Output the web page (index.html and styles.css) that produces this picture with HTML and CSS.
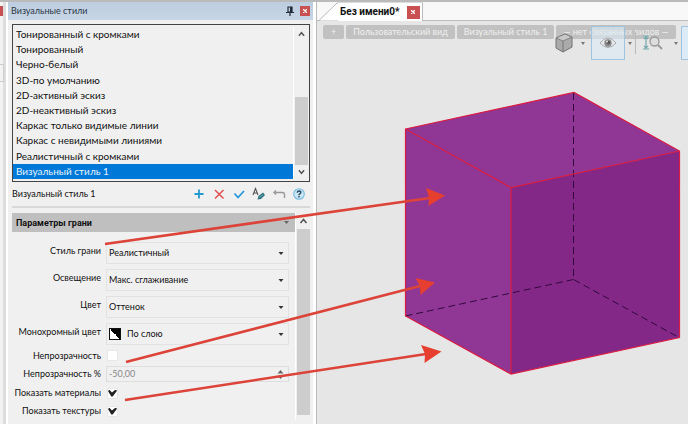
FILE: index.html
```html
<!DOCTYPE html>
<html lang="ru">
<head>
<meta charset="utf-8">
<title>Визуальные стили</title>
<link rel="stylesheet" href="styles.css">
</head>
<body>
<div class="app">
  <div class="dock"><span class="dock-close"></span><span class="dock-page"></span></div>
  <aside class="panel">
    <header class="panel-title">
      <h1>Визуальные стили</h1>
      <button class="pin" aria-label="Закрепить"><svg width="8" height="10" viewBox="0 0 8 10"><path d="M2 1h4v5H2zM0 6.500h8M4 6v4" fill="none" stroke="#222b38" stroke-width="1.200"/><path d="M4 1h2v5H4z" fill="#222b38"/></svg></button>
      <button class="close" aria-label="Закрыть панель"><svg width="4" height="4" viewBox="0 0 4 4"><path d="M0 0l4 4M4 0L0 4" stroke="#fff" stroke-width="1.300"/></svg></button>
    </header>
    <div class="listbox">
      <ul class="styles" role="listbox" aria-label="Визуальные стили">
        <li role="option">Тонированный с кромками</li>
        <li role="option">Тонированный</li>
        <li role="option">Черно-белый</li>
        <li role="option">3D-по умолчанию</li>
        <li role="option">2D-активный эскиз</li>
        <li role="option">2D-неактивный эскиз</li>
        <li role="option">Каркас только видимые линии</li>
        <li role="option">Каркас с невидимыми линиями</li>
        <li role="option">Реалистичный с кромками</li>
        <li role="option" aria-selected="true" class="selected">Визуальный стиль 1</li>
      </ul>
      <div class="scroll">
        <svg class="chevron" viewBox="0 0 13 16"><path d="M3.500 10l3-3.500 3 3.500" /></svg>
        <span class="thumb list-thumb"></span>
        <svg class="chevron" viewBox="0 0 13 16"><path d="M3.500 6l3 3.500 3-3.500" /></svg>
      </div>
    </div>
    <div class="actions">
      <span class="current">Визуальный стиль 1</span>
      <button aria-label="Добавить"><svg viewBox="0 0 14 14"><path d="M7 2.500v9M2.500 7h9" stroke="#2499cc" stroke-width="1.800"/></svg></button>
      <button aria-label="Удалить"><svg viewBox="0 0 14 14"><path d="M3 3l8.500 8.500M11.500 3L3 11.500" stroke="#e64f50" stroke-width="1.500"/></svg></button>
      <button aria-label="Применить"><svg viewBox="0 0 14 14"><path d="M2.500 6.500l3.500 4 6-6.500" fill="none" stroke="#2698da" stroke-width="1.800"/></svg></button>
      <button aria-label="Переименовать"><svg viewBox="0 0 14 14"><path d="M1 8L3.500 1.500 6 8M2 6h3" fill="none" stroke="#555" stroke-width="1.100"/><path d="M5.500 12.500l1-3.500 4.500-3.500 2 2.500-4 4z" fill="#2b7180"/><path d="M7.500 10.500l3.500-3" stroke="#77b3ba"/></svg></button>
      <button aria-label="Отменить"><svg viewBox="0 0 14 14"><path d="M2 5.500h8.500q2 0 2 2V11M4 3.500L2 5.500l2 2" fill="none" stroke="#999" stroke-width="1.400"/></svg></button>
      <button aria-label="Справка"><svg viewBox="0 0 14 14"><circle cx="7" cy="7" r="5.300" fill="#cce6f4" stroke="#77bce0" stroke-width="1.100"/><path d="M5.300 5.700q0-1.700 1.800-1.700t1.700 1.500q0 .8-1 1.300Q7 7.200 7 8.200M7 9v1.400" fill="none" stroke="#244963" stroke-width="1.400"/></svg></button>
    </div>
    <div class="params">
      <div class="params-main">
        <h2><button class="section">Параметры грани<svg width="5" height="3" viewBox="0 0 5 3"><path d="M0 0h5L2.500 3z" fill="#666"/></svg></button></h2>
        <form class="form">
          <label for="face">Стиль грани</label>
          <div class="field"><select id="face"><option>Реалистичный</option></select><svg viewBox="0 0 5 3"><path d="M0 0h5L2.500 3z"/></svg></div>
          <label for="light">Освещение</label>
          <div class="field"><select id="light"><option>Макс. сглаживание</option></select><svg viewBox="0 0 5 3"><path d="M0 0h5L2.500 3z"/></svg></div>
          <label for="color">Цвет</label>
          <div class="field"><select id="color"><option>Оттенок</option></select><svg viewBox="0 0 5 3"><path d="M0 0h5L2.500 3z"/></svg></div>
          <label for="mono">Монохромный цвет</label>
          <div class="field"><span class="swatch"></span><select id="mono" class="with-swatch"><option>По слою</option></select><svg viewBox="0 0 5 3"><path d="M0 0h5L2.500 3z"/></svg></div>
          <label class="compact" for="opacity">Непрозрачность</label>
          <input class="check" type="checkbox" id="opacity">
          <label class="compact" for="percent">Непрозрачность %</label>
          <div class="spinner"><input type="text" id="percent" value="-50,00" disabled><svg viewBox="0 0 7 9"><path d="M.5 3.500L3.500 0l3 3.500zM.5 5.500L3.500 9l3-3.500z" fill="#666"/></svg></div>
          <label class="compact" for="materials">Показать материалы</label>
          <input class="check" type="checkbox" id="materials" checked>
          <label class="compact" for="textures">Показать текстуры</label>
          <input class="check" type="checkbox" id="textures" checked>
        </form>
      </div>
      <div class="scroll">
        <svg class="chevron" viewBox="0 0 13 16"><path d="M3.500 10l3-3.500 3 3.500" /></svg>
        <span class="thumb params-thumb"></span>
      </div>
    </div>
  </aside>
  <main class="view">
    <nav class="tabs">
      <svg class="slope" viewBox="0 0 19 18"><path d="M0 18L18 1h1v17z" fill="#fff"/><path d="M0 18L18 .5h1" fill="none" stroke="#aaa" stroke-width=".8"/></svg>
      <div class="tab"><a href="#scene">Без имени0*</a><button class="close" aria-label="Закрыть документ"><svg width="4" height="4" viewBox="0 0 4 4"><path d="M0 0l4 4M4 0L0 4" stroke="#fff" stroke-width="1.300"/></svg></button></div>
    </nav>
    <div class="canvas" id="scene">
      <div class="chips">
        <button class="add">+</button>
        <button>Пользовательский вид</button>
        <button>Визуальный стиль 1</button>
        <button>— нет связанных видов —</button>
      </div>
      <div class="tools">
        <button aria-label="Ориентация"><svg width="18" height="20" viewBox="0 0 18 20"><path d="M1 5l9-4 7 3v10l-9 5-7-4z" fill="#aaa" stroke="#737373"/><path d="M1 5l7 3 9-4-7-3z" fill="#c8c8c8" stroke="#777" stroke-width=".8"/><path d="M8 8v11" stroke="#777"/></svg></button>
        <button class="drop" aria-label="Варианты ориентации"><svg width="4" height="3" viewBox="0 0 4 3"><path d="M0 0h4L2 3z"/></svg></button>
        <button class="eye" aria-label="Видимость"><svg width="18" height="12" viewBox="0 0 18 12"><path d="M1 6q8-10 16 0-8 9-16 0z" fill="#e6eaed" stroke="#aaa"/><circle cx="9" cy="6" r="3.700" fill="#888"/><circle cx="9.500" cy="5.500" r="1.800" fill="#555"/><circle cx="8" cy="4.500" r="1" fill="#ddd"/></svg></button>
        <button class="drop split" aria-label="Варианты видимости"><svg width="4" height="3" viewBox="0 0 4 3"><path d="M0 0h4L2 3z"/></svg></button>
        <button class="zoom" aria-label="Масштаб"><svg width="20" height="16" viewBox="0 0 20 16"><path d="M3 2v11M0 1h6M0 14h6M1 4l2-2 2 2M1 11l2 2 2-2" fill="none" stroke="#73a7ad" stroke-width="1.200"/><circle cx="11.500" cy="6.500" r="4.500" fill="#ddd" stroke="#999" stroke-width="1.300"/><path d="M15 10l4 4" stroke="#999" stroke-width="1.800"/></svg></button>
        <button class="drop narrow" aria-label="Варианты масштаба"><svg width="4" height="3" viewBox="0 0 4 3"><path d="M0 0h4L2 3z"/></svg></button>
        <button class="next" aria-label="Ещё"></button>
      </div>
      <svg class="cube" width="371" height="403" viewBox="317 21 371 403" role="img" aria-label="Куб">
        <path d="M405.500 129L574 92.500 679.500 151 511 187.500z" fill="#903795"/>
        <path d="M405.500 129L511 187.500V374L405.500 316z" fill="#903796"/>
        <path d="M511 187.500L679.500 151V337.500L511 374z" fill="#842887"/>
        <path d="M573.500 93V279.500L679 337.500M573.500 279.500L405.500 316" fill="none" stroke="#32083f" stroke-dasharray="7 4"/>
        <path d="M405.500 129L574 92.500 679.500 151V337.500L511 374 405.500 316zL511 187.500 679.500 151M511 187.500V374" fill="none" stroke="#d91c42" stroke-width="1.200"/>
      </svg>
    </div>
  </main>
</div>
<svg class="notes" width="688" height="424" viewBox="0 0 688 424" aria-hidden="true">
  <g stroke="#dc4339" stroke-width="2.600"><path d="M105 244L430 198M126 362L420 286M125 400L426 354"/></g>
  <g fill="#e63f2f"><path d="M445 195.500L426 188l3 9.500-.5 8.500zM435 282.500L415.500 278l4.500 8 .5 9zM441.500 351.500L421 345l4 9-.5 9z"/></g>
</svg>
</body>
</html>
```
FILE: styles.css
```css
* { box-sizing: border-box; }
body { margin: 0; overflow: hidden; font: 9px/12px Lato, "Noto Sans", sans-serif; color: #111; background: #f0f0f0; }
button, input, select { font: inherit; color: inherit; margin: 0; padding: 0; border: 0; background: none; }
h1, h2, ul { margin: 0; padding: 0; font: inherit; }
.app { display: grid; grid-template-columns: 8px 308px 1fr; min-height: 100vh; border-top: 2px solid #bababa; }

.dock { background: linear-gradient(90deg, #f3f3f3 3px, #ddd 3px 6px, #fff 6px); padding-top: 4px; }
.dock-close { display: block; width: 3px; height: 10px; background: #c75052; }
.dock-page { display: block; width: 4px; height: 18px; margin-top: 48px; border: 1px solid #ccc; border-left: 0; }

.panel { background: #f0f0f0; border-right: 3px solid #fff; }
.panel-title { display: flex; align-items: center; gap: 6px; height: 18px; padding: 0 3px; background: linear-gradient(#bdcee1, #c7d5e5); }
.panel-title h1 { flex: 1; color: #2b3643; }
.pin { display: flex; }
.close { display: grid; place-items: center; width: 10px; height: 10px; background: #c95152; }

.listbox { display: flex; height: 158px; margin: 4px 3px 0 4px; padding: 2px 1px 2px 0; border: 1px solid #444; background: #f0f0f0; }
.styles { flex: 1; display: grid; grid-template-rows: repeat(10, 1fr); font-size: 10px; line-height: 15px; list-style: none; border-right: 1px solid #fff; }
.styles li { padding-left: 3px; }
.styles .selected { background: #0078d7; color: #e6f5ff; }
.scroll { display: flex; flex-direction: column; width: 13px; margin-left: 1px; }
.thumb { display: block; background: #cdcdcd; }
.list-thumb { flex: 1; margin-top: 56px; }
.chevron { display: block; width: 13px; height: 16px; fill: none; stroke: #555; stroke-width: 1.6px; }
.listbox .chevron { height: 14px; }

.actions { display: flex; align-items: center; gap: 6px; height: 26px; margin: 0 3px 0 4px; padding-right: 4px; border-bottom: 2px solid #d8d8d8; }
.current { flex: 1; }
.actions button { display: block; width: 14px; height: 14px; }
.actions svg { display: block; width: 14px; height: 14px; }

.params { display: flex; margin: 5px 3px 0 4px; }
.params-main { flex: 1; border-right: 1px solid #fff; }
.params > .scroll { height: 202px; }
.params-thumb { flex: 1; }
.section { display: flex; align-items: center; justify-content: space-between; width: 100%; height: 19px; padding: 0 6px 0 4px; background: #bfbfbf; font: bold 9px/12px Roboto, sans-serif; }
.form { display: grid; grid-template-columns: 89px 1fr; column-gap: 5px; grid-template-rows: repeat(4, 27px) 17px 20px 18px 18px; align-items: center; padding: 7px 6px 0 0; }
.form label { text-align: right; padding-bottom: 4px; white-space: nowrap; }
.form .compact { padding-bottom: 0; }
.field { position: relative; height: 22px; border: 1px solid #e2e2e2; display: flex; align-items: center; }
.field select { width: 100%; height: 20px; padding-left: 2px; appearance: none; }
.field .with-swatch { padding-left: 6px; }
.field svg { position: absolute; right: 4px; top: 9px; width: 6px; height: 3px; pointer-events: none; fill: #333; }
.swatch { flex: none; width: 12px; height: 12px; margin-left: 2px; border: 1px solid #111; background: linear-gradient(45deg, #fff 50%, #000 50%); }
.check { appearance: none; width: 11px; height: 11px; margin-left: 1px; background: #fff; border: 1px solid #e8e8e8; position: relative; }
.check:checked::after { content: ""; position: absolute; left: 0; top: 1px; width: 9px; height: 7px; background: #222; clip-path: polygon(0 20%, 16% 4%, 44% 44%, 84% 0, 100% 18%, 52% 100%, 36% 100%); }
.spinner { display: flex; align-items: center; height: 16px; border: 1px solid #dedede; padding-right: 4px; color: #888; }
.spinner input { flex: 1; min-width: 0; padding-left: 2px; }
.spinner svg { width: 7px; height: 9px; }

.view { min-width: 0; background: #e6e6e6; border-left: 1px solid #bbb; }
.tabs { display: flex; height: 19px; padding-left: 2px; background: #f8f8f8; border-bottom: 1px solid #bbb; }
.slope { width: 19px; height: 19px; }
.tab { display: flex; align-items: center; gap: 7px; height: 19px; padding: 0 2px; background: #fff; border-right: 1px solid #bbb; border-top: 1px solid #ddd; }
.tab a { color: #111; font: bold 10px/12px Roboto, sans-serif; text-decoration: none; }
.tab .close { width: 13px; height: 13px; }
.canvas { position: relative; }
.chips { display: flex; flex-wrap: wrap; gap: 2px; padding: 4px 0 4px 6px; }
.chips button { flex: none; height: 14px; padding: 0 7px; border-radius: 2px; background: #c1c1c1; color: #f0f0f0; white-space: nowrap; }
.chips .add { padding: 0 8px; }
.tools { position: absolute; left: 236px; right: 0; top: 5px; height: 34px; display: flex; align-items: center; overflow: hidden; z-index: 1; }
.tools button { flex: none; display: grid; place-items: center; height: 34px; width: 22px; }
.tools .drop { width: 16px; fill: #777; }
.tools .eye { width: 34px; border: 1px solid #9fc4df; background: #dcebf599; }
.tools .split { width: 11px; border-right: 1px solid #bbb; height: 22px; }
.tools .zoom { width: 34px; }
.tools .narrow { width: 11px; }
.tools .next { flex: 1; border: 1px solid #9fc4df; border-right: 0; background: #dcebf5; }
.cube { position: absolute; left: 0; top: 0; pointer-events: none; }
.notes { position: absolute; left: 0; top: 0; pointer-events: none; z-index: 2; }
```
